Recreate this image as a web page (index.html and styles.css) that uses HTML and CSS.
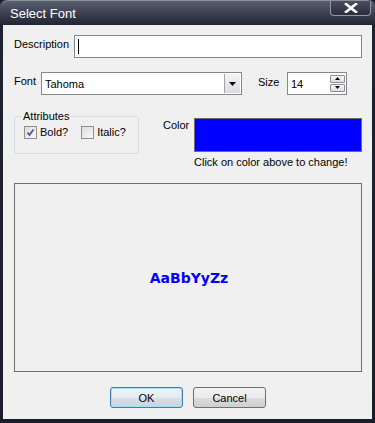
FILE: index.html
```html
<!DOCTYPE html>
<html lang="en">
<head>
<meta charset="UTF-8">
<title>Select Font</title>
<link rel="stylesheet" href="styles.css">
</head>
<body>
<div class="window">
  <div class="titlebar">
    <span class="title">Select Font</span>
    <span class="close-btn">
      <svg width="14" height="10" viewBox="0 0 14 10"><path d="M2 1 L12 9 M12 1 L2 9" stroke="#fff" stroke-width="2.6" stroke-linecap="square"/></svg>
    </span>
  </div>

  <div class="client">
    <div class="row desc-row">
      <label class="lbl desc-lbl">Description</label>
      <div class="textbox desc-input"><span class="caret"></span></div>
    </div>

    <div class="row font-row">
      <label class="lbl font-lbl">Font</label>
      <div class="textbox select">
        <span class="select-value">Tahoma</span>
        <span class="drop-btn">
          <svg width="7" height="4" viewBox="0 0 7 4"><path d="M0 0 H7 L3.5 4 Z" fill="#000"/></svg>
        </span>
      </div>
      <label class="lbl size-lbl">Size</label>
      <div class="textbox size-input">
        <span class="size-value">14</span>
        <span class="spinner">
          <span class="spin-btn"><svg width="5" height="3" viewBox="0 0 5 3"><path d="M0 3 H5 L2.5 0 Z" fill="#000"/></svg></span>
          <span class="spin-btn"><svg width="5" height="3" viewBox="0 0 5 3"><path d="M0 0 H5 L2.5 3 Z" fill="#000"/></svg></span>
        </span>
      </div>
    </div>

    <div class="row attr-row">
      <fieldset class="group">
        <legend>Attributes</legend>
        <div class="checks">
          <span class="check-item">
            <span class="checkbox checked">
              <svg width="9" height="9" viewBox="0 0 9 9"><path d="M1.5 4.5 L3.5 7 L7.5 1.5" stroke="#4a5a9a" stroke-width="1.8" fill="none"/></svg>
            </span>
            Bold?
          </span>
          <span class="check-item">
            <span class="checkbox"></span>
            Italic?
          </span>
        </div>
      </fieldset>
      <label class="lbl color-lbl">Color</label>
      <div class="color-col">
        <div class="color-swatch"></div>
        <div class="hint">Click on color above to change!</div>
      </div>
    </div>

    <div class="preview">
      <span class="sample">AaBbYyZz</span>
    </div>

    <div class="buttons">
      <button class="btn btn-default">OK</button>
      <button class="btn">Cancel</button>
    </div>
  </div>
</div>
</body>
</html>
```

FILE: styles.css
```css
body {
  margin: 0;
  padding: 0;
  background-color: #1b1d2a;
  font-family: 'Liberation Sans', Arial, sans-serif;
  font-size: 11px;
  color: #000;
}

.window {
  width: 375px;
  height: 423px;
  box-sizing: border-box;
  padding: 0 3px 4px 3px;
  background: linear-gradient(#5d6272 0px, #3a3e4e 14px, #1f2231 26px, #1b1d2a 100%);
  border-radius: 6px 6px 0 0;
  display: flex;
  flex-direction: column;
}

.titlebar {
  height: 25px;
  display: flex;
  align-items: flex-start;
  justify-content: space-between;
  border-top: 1px solid #8c909c;
  border-radius: 6px 6px 0 0;
  box-sizing: border-box;
}

.title {
  color: #fff;
  font-size: 13px;
  margin: 5px 0 0 7px;
  line-height: 15px;
}

.close-btn {
  width: 41px;
  height: 15px;
  margin-right: 1px;
  box-sizing: border-box;
  border: 1px solid #9499a4;
  border-top: none;
  border-radius: 0 0 4px 4px;
  background: linear-gradient(#4a4e5d, #2a2d3b);
  display: flex;
  align-items: center;
  justify-content: center;
}

.client {
  flex: 1;
  background-color: #f0f0f0;
  padding: 10px 10px 0 11px;
  display: flex;
  flex-direction: column;
}

.row {
  display: flex;
  align-items: flex-start;
}

.lbl {
  line-height: 13px;
}

.textbox {
  height: 23px;
  box-sizing: border-box;
  border: 1px solid #828790;
  background-color: #fff;
  display: flex;
  align-items: center;
}

.desc-lbl {
  width: 60px;
  padding-top: 3px;
}

.desc-input {
  flex: 1;
}

.caret {
  width: 1px;
  height: 15px;
  background-color: #000;
  margin-left: 3px;
}

.font-row {
  margin-top: 14px;
}

.font-lbl {
  width: 27px;
  padding-top: 3px;
}

.select {
  width: 201px;
  justify-content: space-between;
  padding: 1px;
}

.select-value {
  padding-left: 2px;
}

.drop-btn {
  width: 15px;
  height: 19px;
  border-left: 1px solid #a0a4aa;
  background: linear-gradient(#f4f4f4, #dcdcdc);
  display: flex;
  align-items: center;
  justify-content: center;
}

.size-lbl {
  margin-left: 16px;
  width: 29px;
  padding-top: 4px;
}

.size-input {
  width: 60px;
  justify-content: space-between;
  padding: 2px 1px 2px 2px;
}

.size-value {
  padding-left: 1px;
}

.spinner {
  display: flex;
  flex-direction: column;
}

.spin-btn {
  width: 15px;
  height: 8px;
  box-sizing: border-box;
  border: 1px solid #8c8f94;
  border-radius: 1px;
  background: linear-gradient(#f8f8f8, #dedede);
  display: flex;
  align-items: center;
  justify-content: center;
  margin-bottom: 1px;
}

.attr-row {
  margin-top: 15px;
}

.group {
  width: 125px;
  height: 44px;
  box-sizing: border-box;
  margin: 0;
  padding: 0 6px 0 7px;
  border: 1px solid #d5dce2;
  border-radius: 3px;
}

.group legend {
  padding: 0 1px;
  line-height: 13px;
}

.checks {
  display: flex;
  gap: 13px;
  padding: 3px 0 0 2px;
}

.check-item {
  display: flex;
  align-items: center;
  gap: 3px;
  line-height: 13px;
}

.checkbox {
  width: 13px;
  height: 13px;
  box-sizing: border-box;
  border: 1px solid #8f8f8f;
  background: linear-gradient(135deg, #dcdcdc, #f8f8f8);
  display: flex;
  align-items: center;
  justify-content: center;
}

.color-lbl {
  margin: 9px 0 0 24px;
  width: 31px;
}

.color-col {
  margin-top: 8px;
  display: flex;
  flex-direction: column;
}

.color-swatch {
  width: 168px;
  height: 34px;
  box-sizing: border-box;
  border: 1px solid #6d6d6d;
  background-color: #0000ff;
}

.hint {
  margin-top: 4px;
  line-height: 13px;
}

.preview {
  margin-top: 14px;
  height: 189px;
  box-sizing: border-box;
  border: 1px solid #6f6f6f;
  display: flex;
  align-items: center;
  justify-content: center;
}

.sample {
  font-family: 'DejaVu Sans', sans-serif;
  font-weight: bold;
  font-size: 14px;
  color: #0000ff;
  margin-left: 2px;
}

.buttons {
  margin-top: 15px;
  display: flex;
  justify-content: center;
  gap: 10px;
}

.btn {
  width: 73px;
  height: 21px;
  box-sizing: border-box;
  font-family: 'Liberation Sans', Arial, sans-serif;
  font-size: 11px;
  color: #000;
  border: 1px solid #707070;
  border-radius: 3px;
  background: linear-gradient(#f2f2f2 0%, #ebebeb 50%, #dddddd 51%, #cfcfcf 100%);
  padding: 0;
}

.btn-default {
  border-color: #3c7fb1;
  box-shadow: inset 0 0 0 1px #9fe0fa;
  background: linear-gradient(#eef3f6 0%, #e4ecf0 50%, #d6e0e6 51%, #c9d5dc 100%);
}
```
